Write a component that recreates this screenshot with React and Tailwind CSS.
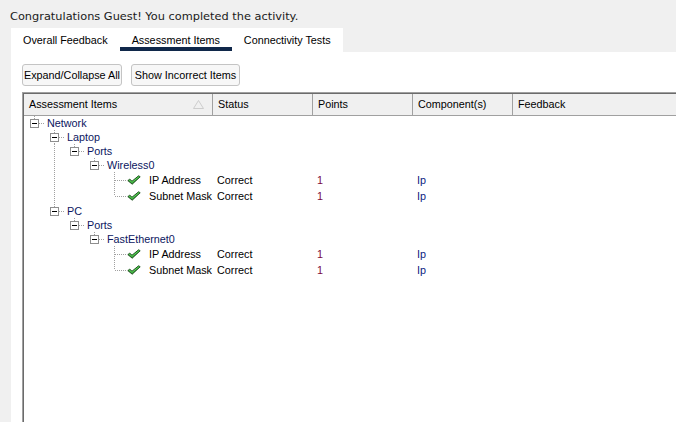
import React from 'react';

const tabs = [
  { label: 'Overall Feedback', active: false },
  { label: 'Assessment Items', active: true },
  { label: 'Connectivity Tests', active: false },
];

// level: tree depth, next: has a sibling below, through: ancestor columns that keep a line going
const rows = [
  { label: 'Network', level: 0, next: false, through: [] },
  { label: 'Laptop', level: 1, next: true, through: [] },
  { label: 'Ports', level: 2, next: false, through: [1] },
  { label: 'Wireless0', level: 3, next: false, through: [1] },
  { label: 'IP Address', level: 4, leaf: true, next: true, through: [1], status: 'Correct', points: '1', comp: 'Ip' },
  { label: 'Subnet Mask', level: 4, leaf: true, next: false, through: [1], status: 'Correct', points: '1', comp: 'Ip' },
  { label: 'PC', level: 1, next: false, through: [] },
  { label: 'Ports', level: 2, next: false, through: [] },
  { label: 'FastEthernet0', level: 3, next: false, through: [] },
  { label: 'IP Address', level: 4, leaf: true, next: true, through: [], status: 'Correct', points: '1', comp: 'Ip' },
  { label: 'Subnet Mask', level: 4, leaf: true, next: false, through: [], status: 'Correct', points: '1', comp: 'Ip' },
];

const TreeLines = ({ level, leaf, next, through, h }) => {
  const c = 10 + level * 20;
  const cy = Math.floor(h / 2);
  const w = c + 13;
  const dot = { stroke: '#a0a0a0', strokeWidth: 1, strokeDasharray: '1 1', shapeRendering: 'crispEdges' };
  return (
    <svg width={w} height={h} className="shrink-0">
      {through.map((a) => (
        <line key={a} x1={10 + a * 20 + 0.5} y1={0} x2={10 + a * 20 + 0.5} y2={h} {...dot} />
      ))}
      <line x1={c + 0.5} y1={0} x2={c + 0.5} y2={cy} {...dot} />
      {next && <line x1={c + 0.5} y1={cy} x2={c + 0.5} y2={h} {...dot} />}
      <line x1={c + 1} y1={cy + 0.5} x2={leaf ? c + 13 : c + 10} y2={cy + 0.5} {...dot} />
      {!leaf && (
        <g shapeRendering="crispEdges">
          <rect x={c - 4 + 0.5} y={cy - 4 + 0.5} width={8} height={8} fill="#fff" stroke="#8e8e8e" />
          <line x1={c - 2} y1={cy + 0.5} x2={c + 3} y2={cy + 0.5} stroke="#000" />
        </g>
      )}
    </svg>
  );
};

const Check = () => (
  <svg width="14" height="10" viewBox="0 0 14 10" className="shrink-0">
    <path d="M0.8 5.6 L2.8 4.2 L5 6.2 L11.6 0.8 L13.2 1.8 L5.2 9.2 Z" fill="#2f8f2f" stroke="#1b4a1b" strokeWidth="0.9" strokeLinejoin="round" />
    <path d="M2.4 5.2 L5 7.4 L12 1.6" fill="none" stroke="#5fe05f" strokeWidth="0.9" strokeLinecap="round" />
  </svg>
);

const App = () => {
  return (
    <div className="h-[422px] w-[676px] overflow-hidden bg-[#f0f0f0] font-['Liberation_Sans',Arial,sans-serif] text-[10.8px] text-black">
      <div className="h-[28px] pl-[10px] pt-[10px] font-['DejaVu_Sans',Verdana,sans-serif] text-[11.35px] leading-[13px] text-[#1a1a1a]">
        Congratulations Guest! You completed the activity.
      </div>

      <div className="ml-[11px] flex h-[24px] w-fit bg-white">
        {tabs.map((t) => (
          <div key={t.label} className="flex flex-col pt-[6px]">
            <span className="px-[12px] leading-[13px]">{t.label}</span>
            <div className={t.active ? 'h-[4px] bg-[#10284a]' : 'h-[4px]'} />
          </div>
        ))}
      </div>

      <div className="ml-[11px] flex h-[370px] flex-col bg-white pl-[11px] pt-[12px]">
        <div className="flex gap-[9px]">
          <button className="h-[22px] w-[100px] rounded-[3px] border border-[#c4c4c4] bg-[#f7f7f7] leading-[13px]">
            Expand/Collapse All
          </button>
          <button className="h-[22px] w-[109px] rounded-[3px] border border-[#c4c4c4] bg-[#f7f7f7] leading-[13px]">
            Show Incorrect Items
          </button>
        </div>

        <div className="mt-[6px] flex-1 border-l border-t border-[#a0a0a0]">
          <div className="h-full border-l border-t border-[#6b6b6b]">
            <div className="flex h-[22px] border-b border-[#a0a0a0] bg-[#f0f0f0] leading-[13px]">
              <div className="flex w-[189px] items-center justify-between border-r border-[#a0a0a0] pl-[5px] pr-[8px]">
                <span>Assessment Items</span>
                <svg width="11" height="9" viewBox="0 0 11 9">
                  <path d="M5.5 0.5 L10.5 8.5 L0.5 8.5 Z" fill="none" stroke="#cdcdcd" strokeWidth="1" />
                </svg>
              </div>
              <div className="flex w-[100px] items-center border-r border-[#a0a0a0] pl-[5px]">Status</div>
              <div className="flex w-[100px] items-center border-r border-[#a0a0a0] pl-[5px]">Points</div>
              <div className="flex w-[100px] items-center border-r border-[#a0a0a0] pl-[5px]">Component(s)</div>
              <div className="flex flex-1 items-center pl-[5px]">Feedback</div>
            </div>

            {rows.map((r, i) => {
              const h = r.leaf ? 16 : 14;
              return (
                <div key={i} className={`flex items-center leading-[13px] ${r.leaf ? 'h-[16px]' : 'h-[14px]'}`}>
                  <div className="flex h-full w-[189px] items-center">
                    <TreeLines level={r.level} leaf={r.leaf} next={r.next} through={r.through} h={h} />
                    {r.leaf ? (
                      <>
                        <Check />
                        <span className="ml-[8px] whitespace-nowrap">{r.label}</span>
                      </>
                    ) : (
                      <span className="whitespace-nowrap text-[#0b1660]">{r.label}</span>
                    )}
                  </div>
                  <div className="w-[100px] pl-[4px]">{r.status}</div>
                  <div className="w-[100px] pl-[4px] text-[#7b0a3e]">{r.points}</div>
                  <div className="w-[100px] pl-[4px] text-[#0a1a80]">{r.comp}</div>
                </div>
              );
            })}
          </div>
        </div>
      </div>
    </div>
  );
};

export default App;
